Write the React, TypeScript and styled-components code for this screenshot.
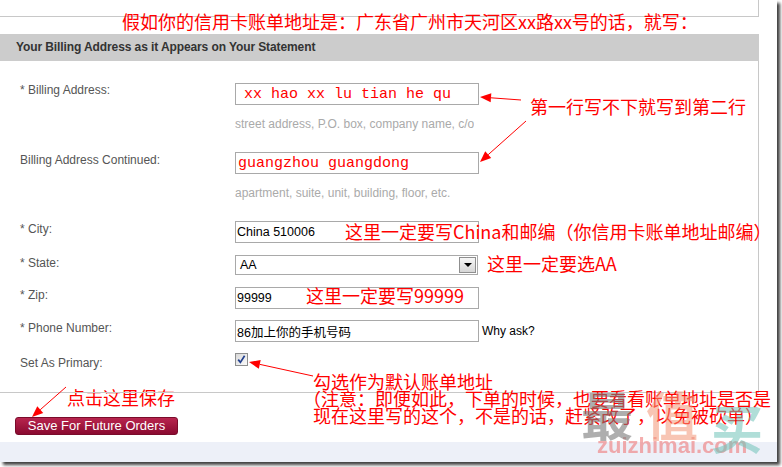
import styled, { createGlobalStyle } from "styled-components";

const GlobalStyle = createGlobalStyle`
  html, body {
    margin: 0;
    padding: 0;
    background: #ffffff;
  }
  body {
    font-family: "Liberation Sans", Arial, sans-serif;
  }
`;

const NOTE_FONT = `"Noto Sans CJK SC", "Liberation Sans", sans-serif`;

const Screen = styled.div`
  width: 782px;
  height: 467px;
  overflow: hidden;
  background: #ffffff;
`;

const Frame = styled.div`
  position: relative;
  width: 777px;
  height: 462px;
  display: flex;
  flex-direction: column;
  background: #ffffff;
  box-shadow: 3px 3px 3px rgba(0, 0, 0, 0.75);
`;

const TopStrip = styled.div`
  box-sizing: border-box;
  width: 759px;
  height: 17px;
  border-right: 1px solid #c8c8c8;
  border-bottom: 1px solid #c8c8c8;
`;

const Headline = styled.div`
  height: 21px;
  margin-top: -4px;
  padding-left: 122px;
  font: 18px/17px ${NOTE_FONT};
  color: #ff0000;
  white-space: nowrap;
`;

const SectionTitle = styled.h2`
  box-sizing: border-box;
  width: 759px;
  height: 27px;
  margin: 0;
  padding-left: 16px;
  background: #cccccc;
  color: #333333;
  font: bold 12px/27px "Liberation Sans", Arial, sans-serif;
  letter-spacing: -0.1px;
`;

const FormBody = styled.div`
  position: relative;
  box-sizing: border-box;
  width: 759px;
  height: 332px;
  padding-top: 22px;
  border-right: 1px solid #c8c8c8;
  border-bottom: 1px solid #c8c8c8;
  display: flex;
  flex-direction: column;
`;

const Row = styled.div<{ $after?: number }>`
  display: grid;
  grid-template-columns: 235px 1fr;
  margin-bottom: ${(p) => p.$after ?? 0}px;
`;

const Label = styled.div<{ $drop?: number }>`
  padding: ${(p) => p.$drop ?? 1}px 0 0 20px;
  font-size: 12px;
  line-height: 14px;
  color: #555555;
`;

const Field = styled.div`
  position: relative;
  display: flex;
  flex-direction: column;
  align-items: flex-start;
`;

const InputLine = styled.div`
  display: flex;
  align-items: center;
  gap: 3px;
`;

const TextInput = styled.input<{ $scrawl?: boolean; $indent?: number }>`
  box-sizing: border-box;
  width: 244px;
  height: 22px;
  margin: 0;
  padding: 0 2px 0 ${(p) => p.$indent ?? 1}px;
  border: 1px solid #a9a9a9;
  background: #ffffff;
  outline: none;
  color: ${(p) => (p.$scrawl ? "#ff0000" : "#000000")};
  font: ${(p) =>
    p.$scrawl
      ? `15px "Liberation Mono", "Noto Sans CJK SC", monospace`
      : `12.5px "Liberation Sans", "Noto Sans CJK SC", sans-serif`};
`;

const Hint = styled.div`
  max-width: 244px;
  overflow: hidden;
  margin-top: 12px;
  font-size: 12px;
  line-height: 14px;
  color: #aaaaaa;
  white-space: nowrap;
`;

const SelectBox = styled.div`
  box-sizing: border-box;
  width: 243px;
  height: 20px;
  padding: 0 1px 0 4px;
  border: 1px solid #a9a9a9;
  display: flex;
  align-items: center;
  justify-content: space-between;
  font-size: 12.5px;
  color: #000000;
`;

const DropButton = styled.span`
  box-sizing: border-box;
  width: 17px;
  height: 16px;
  border: 1px solid #8f8f8f;
  background: linear-gradient(#f7f7f7, #d6d6d6);
  display: flex;
  align-items: center;
  justify-content: center;

  &::after {
    content: "";
    border-left: 4px solid transparent;
    border-right: 4px solid transparent;
    border-top: 4px solid #000000;
  }
`;

const CheckBox = styled.span`
  box-sizing: border-box;
  display: flex;
  width: 13px;
  height: 13px;
  border: 1px solid #8e8f8f;
  background: linear-gradient(135deg, #d8d8d8, #fbfbfb);
`;

const WhyAsk = styled.span`
  font-size: 12px;
  color: #000000;
`;

const Callout = styled.div<{ $x: number; $y: number }>`
  position: absolute;
  left: ${(p) => p.$x}px;
  top: ${(p) => p.$y}px;
  font: 18px/18px ${NOTE_FONT};
  color: #ff0000;
  white-space: nowrap;
`;

const CalloutLine = styled.div<{ $shift?: number }>`
  margin-left: ${(p) => p.$shift ?? 0}px;
  line-height: 17px;
`;

const Footer = styled.div`
  height: 49px;
  padding-left: 15px;
  display: flex;
  flex-direction: column;
  align-items: flex-start;
`;

const FooterNote = styled.div`
  height: 18px;
  margin: -5px 0 0 52px;
  font: 18px/18px ${NOTE_FONT};
  color: #ff0000;
`;

const SaveButton = styled.button`
  box-sizing: border-box;
  width: 163px;
  height: 18px;
  margin-top: 11px;
  padding: 0;
  border: 1px solid #7a0b2b;
  border-radius: 3px;
  background: linear-gradient(#b8254e, #8a0a30);
  color: #ffffff;
  font: 13px/16px "Liberation Sans", Arial, sans-serif;
`;

const BottomBand = styled.div`
  height: 20px;
  background: #edf0f8;
`;

const Overlay = styled.svg`
  position: absolute;
  left: 0;
  top: 0;
  pointer-events: none;
`;

const Watermark = styled.div`
  position: absolute;
  left: 581px;
  top: 388px;
  display: flex;
  flex-direction: column;
  pointer-events: none;
  filter: blur(0.4px);
`;

const Marks = styled.div`
  display: flex;
  align-items: flex-start;
  gap: 13px;
  height: 52px;
`;

const Mark = styled.span<{ $color: string; $drop?: number }>`
  position: relative;
  top: ${(p) => p.$drop ?? 0}px;
  font: bold 52px/52px ${NOTE_FONT};
  color: ${(p) => p.$color};
`;

const Domain = styled.span`
  margin: -5px 0 0 16px;
  font: bold 22px/22px "Liberation Sans", Arial, sans-serif;
  color: rgba(238, 120, 120, 0.6);
`;

type Arrow = { from: [number, number]; to: [number, number] };

const arrows: Arrow[] = [
  { from: [521, 100], to: [480, 97] },
  { from: [526, 121], to: [480, 162] },
  { from: [313, 376], to: [249, 362] },
  { from: [66, 387], to: [32, 417] },
];

function ArrowMark({ from, to }: Arrow) {
  const [x1, y1] = from;
  const [x2, y2] = to;
  const len = Math.hypot(x2 - x1, y2 - y1);
  const ux = (x2 - x1) / len;
  const uy = (y2 - y1) / len;
  const bx = x2 - ux * 11;
  const by = y2 - uy * 11;
  const head = [
    [x2, y2],
    [bx - uy * 4.5, by + ux * 4.5],
    [bx + uy * 4.5, by - ux * 4.5],
  ]
    .map((p) => p.join(","))
    .join(" ");
  return (
    <g>
      <line x1={x1} y1={y1} x2={bx} y2={by} stroke="#ff0000" strokeWidth={1} />
      <polygon points={head} fill="#ff0000" />
    </g>
  );
}

export default function App() {
  return (
    <Screen>
      <GlobalStyle />
      <Frame>
        <TopStrip />
        <Headline>假如你的信用卡账单地址是：广东省广州市天河区xx路xx号的话，就写：</Headline>
        <SectionTitle>Your Billing Address as it Appears on Your Statement</SectionTitle>

        <FormBody>
          <Row $after={21}>
            <Label $drop={0}>* Billing Address:</Label>
            <Field>
              <TextInput $scrawl $indent={8} readOnly value="xx hao xx lu tian he qu" />
              <Hint>street address, P.O. box, company name, c/o</Hint>
              <Callout $x={295} $y={14}>第一行写不下就写到第二行</Callout>
            </Field>
          </Row>

          <Row $after={21}>
            <Label>Billing Address Continued:</Label>
            <Field>
              <TextInput $scrawl $indent={2} readOnly value="guangzhou guangdong" />
              <Hint>apartment, suite, unit, building, floor, etc.</Hint>
            </Field>
          </Row>

          <Row $after={12}>
            <Label>* City:</Label>
            <Field>
              <TextInput readOnly value="China 510006" />
              <Callout $x={110} $y={1}>这里一定要写China和邮编（你信用卡账单地址邮编）</Callout>
            </Field>
          </Row>

          <Row $after={12}>
            <Label>* State:</Label>
            <Field>
              <SelectBox>
                AA
                <DropButton />
              </SelectBox>
              <Callout $x={252} $y={-1}>这里一定要选AA</Callout>
            </Field>
          </Row>

          <Row $after={11}>
            <Label>* Zip:</Label>
            <Field>
              <TextInput readOnly value="99999" />
              <Callout $x={71} $y={-1}>这里一定要写99999</Callout>
            </Field>
          </Row>

          <Row $after={11}>
            <Label>* Phone Number:</Label>
            <Field>
              <InputLine>
                <TextInput readOnly value="86加上你的手机号码" />
                <WhyAsk>Why ask?</WhyAsk>
              </InputLine>
            </Field>
          </Row>

          <Row>
            <Label $drop={3}>Set As Primary:</Label>
            <Field>
              <CheckBox>
                <svg width="11" height="11" viewBox="0 0 11 11">
                  <path d="M2.2 5.6 L4.4 8.4 L8.6 1.8" fill="none" stroke="#22408e" strokeWidth="1.7" />
                </svg>
              </CheckBox>
              <Callout $x={78} $y={20}>
                <CalloutLine>勾选作为默认账单地址</CalloutLine>
                <CalloutLine $shift={-10}>（注意：即便如此，下单的时候，也要看看账单地址是否是</CalloutLine>
                <CalloutLine>现在这里写的这个，不是的话，赶紧改了，以免被砍单）</CalloutLine>
              </Callout>
            </Field>
          </Row>
        </FormBody>

        <Footer>
          <FooterNote>点击这里保存</FooterNote>
          <SaveButton>Save For Future Orders</SaveButton>
        </Footer>
        <BottomBand />

        <Overlay width={777} height={462}>
          {arrows.map((a, i) => (
            <ArrowMark key={i} {...a} />
          ))}
        </Overlay>

        <Watermark>
          <Marks>
            <Mark $color="rgba(120, 120, 120, 0.6)">最</Mark>
            <Mark $color="rgba(242, 150, 118, 0.55)">值</Mark>
            <Mark $color="rgba(112, 194, 184, 0.55)" $drop={13}>买</Mark>
          </Marks>
          <Domain>zuizhimai.com</Domain>
        </Watermark>
      </Frame>
    </Screen>
  );
}
